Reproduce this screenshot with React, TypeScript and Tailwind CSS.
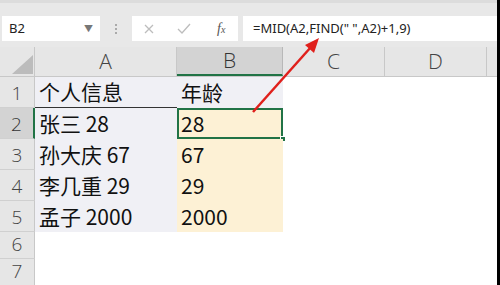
import { Fragment } from 'react'

const rows = [
  { n: 1, a: '个人信息', b: '年龄' },
  { n: 2, a: '张三 28', b: '28' },
  { n: 3, a: '孙大庆 67', b: '67' },
  { n: 4, a: '李几重 29', b: '29' },
  { n: 5, a: '孟子 2000', b: '2000' },
]

const cols = [
  { id: 'A', w: 'w-[142px]' },
  { id: 'B', w: 'w-[106px]' },
  { id: 'C', w: 'w-[102px]' },
  { id: 'D', w: 'w-[102px]' },
]

const FormulaBar = () => (
  <div className="flex h-[47px] shrink-0 items-start bg-[#e8e8e8] pt-[13px] border-t-[3px] border-[#dcdcdc]">
    <div className="ml-[2px] flex h-[25px] w-[98px] items-center justify-between bg-white pl-[7px] pr-[7px] text-[13px] text-[#222]">
      <span>B2</span>
      <span className="text-[9px] text-[#777]">▼</span>
    </div>
    <div className="flex h-[25px] w-[32px] flex-col items-center justify-center gap-[2px]">
      <span className="h-[2px] w-[2px] bg-[#aaa]" />
      <span className="h-[2px] w-[2px] bg-[#aaa]" />
      <span className="h-[2px] w-[2px] bg-[#aaa]" />
    </div>
    <div className="flex h-[25px] w-[106px] items-center bg-white pl-[11px] text-[#c0c0c0]">
      <svg width="12" height="12" viewBox="0 0 12 12" className="mr-[22px]">
        <path d="M2 2 L10 10 M10 2 L2 10" stroke="#bdbdbd" strokeWidth="1.3" />
      </svg>
      <svg width="14" height="12" viewBox="0 0 14 12" className="mr-[26px]">
        <path d="M1 6 L5 10 L13 1" stroke="#bdbdbd" strokeWidth="1.3" fill="none" />
      </svg>
      <span className="font-['Liberation_Serif',serif] text-[14px] italic text-[#555]">
        f<span className="text-[10px]">x</span>
      </span>
    </div>
    <div className="ml-[5px] flex h-[25px] flex-1 items-center bg-white pl-[10px] text-[13px] text-[#222]">
      =MID(A2,FIND(" ",A2)+1,9)
    </div>
  </div>
)

const HeaderRow = () => (
  <div className="flex h-[30px] shrink-0 bg-[#e6e6e6] border-b border-[#c8c8c8]">
    <div className="relative w-[35px] shrink-0 border-r border-[#c8c8c8]">
      <svg className="absolute left-[12px] top-[8px]" width="21" height="19" viewBox="0 0 21 19">
        <path d="M21 0 L21 19 L0 19 Z" fill="#bcbcbc" />
      </svg>
    </div>
    {cols.map((c) => (
      <div
        key={c.id}
        className={`${c.w} flex shrink-0 items-center justify-center border-r font-['Open_Sans',sans-serif] text-[21px] font-light ${
          c.id === 'B'
            ? 'border-[#b8b8b8] border-b-2 border-b-[#217346] bg-[#d3d3d3] text-[#333]'
            : 'border-[#c8c8c8] text-[#444]'
        }`}
      >
        {c.id}
      </div>
    ))}
    <div className="flex-1" />
  </div>
)

const RowHeader = ({ n, h, active }: { n: number; h: string; active?: boolean }) => (
  <div
    className={`${h} flex w-[35px] shrink-0 items-end justify-center pb-[1px] font-['Open_Sans',sans-serif] text-[19px] font-light leading-[26px] ${
      active
        ? 'border-r-2 border-[#217346] bg-[#d3d3d3] text-[#333]'
        : 'border-r border-[#c8c8c8] bg-[#e6e6e6] text-[#444]'
    } border-b border-b-[#d0d0d0]`}
  >
    {n}
  </div>
)

export default function App() {
  return (
    <div className="relative flex h-[285px] w-[500px] overflow-hidden bg-white font-['Noto_Sans','Noto_Sans_CJK_SC',sans-serif]">
      <div className="flex flex-1 flex-col">
        <FormulaBar />
        <HeaderRow />
        {rows.map((r) => (
          <div key={r.n} className="flex h-[31px] shrink-0">
            <RowHeader n={r.n} h="h-[31px]" active={r.n === 2} />
            <div
              className={`flex w-[142px] shrink-0 items-end bg-[#f0f0f5] pb-[2px] pl-[4px] font-['Noto_Sans_CJK_SC',sans-serif] text-[21px] leading-[28px] text-[#111] ${
                r.n === 1 ? 'border-b border-[#333]' : ''
              }`}
            >
              {r.a}
            </div>
            <div
              className={`relative flex w-[106px] shrink-0 items-end pb-[2px] pl-[4px] font-['Noto_Sans_CJK_SC',sans-serif] text-[21px] leading-[28px] text-[#111] ${
                r.n === 1 ? 'bg-[#f0f0f5]' : 'bg-[#fdf1d5]'
              }`}
            >
              {r.b}
              {r.n === 2 && (
                <Fragment>
                  <span className="absolute inset-0 border-2 border-[#217346]" />
                  <span className="absolute -bottom-[3px] -right-[3px] h-[6px] w-[6px] border border-white bg-[#217346]" />
                </Fragment>
              )}
            </div>
            <div className="flex-1" />
          </div>
        ))}
        {[6, 7].map((n) => (
          <div key={n} className="flex h-[27px] shrink-0">
            <RowHeader n={n} h="h-[27px]" />
            <div className="flex-1" />
          </div>
        ))}
      </div>
      <div className="w-[3px] shrink-0 bg-black" />
      <svg className="pointer-events-none absolute left-0 top-0" width="500" height="285">
        <line x1="253" y1="112" x2="311" y2="47" stroke="#e0201c" strokeWidth="2.5" />
        <path d="M319 38 L305 45 L314 53 Z" fill="#e0201c" />
      </svg>
    </div>
  )
}
